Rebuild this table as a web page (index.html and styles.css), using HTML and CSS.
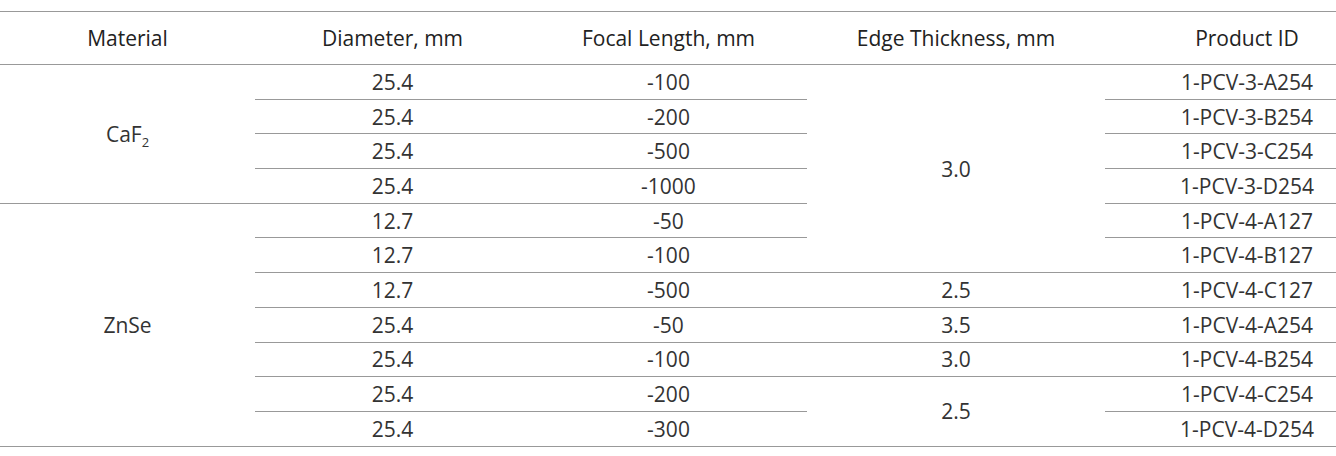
FILE: index.html
```html
<!DOCTYPE html>
<html>
<head>
<meta charset="utf-8">
<link rel="stylesheet" href="styles.css">
</head>
<body>
<table class="spec">
  <thead>
    <tr>
      <th class="c-mat">Material</th>
      <th class="c-dia">Diameter, mm</th>
      <th class="c-foc">Focal Length, mm</th>
      <th class="c-edge">Edge Thickness, mm</th>
      <th class="c-id">Product ID</th>
    </tr>
  </thead>
  <tbody>
    <tr><td rowspan="4" class="mat">CaF<sub>2</sub></td><td>25.4</td><td>-100</td><td rowspan="6">3.0</td><td class="c-id">1-PCV-3-A254</td></tr>
    <tr><td>25.4</td><td>-200</td><td class="c-id">1-PCV-3-B254</td></tr>
    <tr><td>25.4</td><td>-500</td><td class="c-id">1-PCV-3-C254</td></tr>
    <tr><td>25.4</td><td>-1000</td><td class="c-id">1-PCV-3-D254</td></tr>
    <tr><td rowspan="7" class="mat">ZnSe</td><td>12.7</td><td>-50</td><td class="c-id">1-PCV-4-A127</td></tr>
    <tr><td>12.7</td><td>-100</td><td class="c-id">1-PCV-4-B127</td></tr>
    <tr><td>12.7</td><td>-500</td><td>2.5</td><td class="c-id">1-PCV-4-C127</td></tr>
    <tr><td>25.4</td><td>-50</td><td>3.5</td><td class="c-id">1-PCV-4-A254</td></tr>
    <tr><td>25.4</td><td>-100</td><td>3.0</td><td class="c-id">1-PCV-4-B254</td></tr>
    <tr><td>25.4</td><td>-200</td><td rowspan="2">2.5</td><td class="c-id">1-PCV-4-C254</td></tr>
    <tr><td>25.4</td><td>-300</td><td class="c-id">1-PCV-4-D254</td></tr>
  </tbody>
</table>
</body>
</html>
```
FILE: styles.css
```css
html, body {
  margin: 0;
  padding: 0;
  background: #fff;
  overflow: hidden;
}
.spec {
  margin-top: 11px;
  width: 1336px;
  border-collapse: collapse;
  table-layout: fixed;
  font-family: "Open Sans", "Noto Sans", sans-serif;
  font-size: 21px;
  color: #333;
}
.spec th, .spec td {
  border-top: 1px solid #999;
  border-bottom: 1px solid #999;
  padding: 0;
  text-align: center;
  vertical-align: middle;
  font-weight: 400;
  line-height: 24px;
}
.spec th {
  height: 52px;
  color: #222;
}
.spec td {
  height: 33.7px;
}
.c-mat { width: 255px; }
.c-dia { width: 275px; }
.c-foc { width: 277px; }
.c-edge { width: 298px; }
.spec .c-id { padding-left: 53px; }
.mat sub {
  font-size: 13px;
  vertical-align: -5px;
  line-height: 0;
}
```
